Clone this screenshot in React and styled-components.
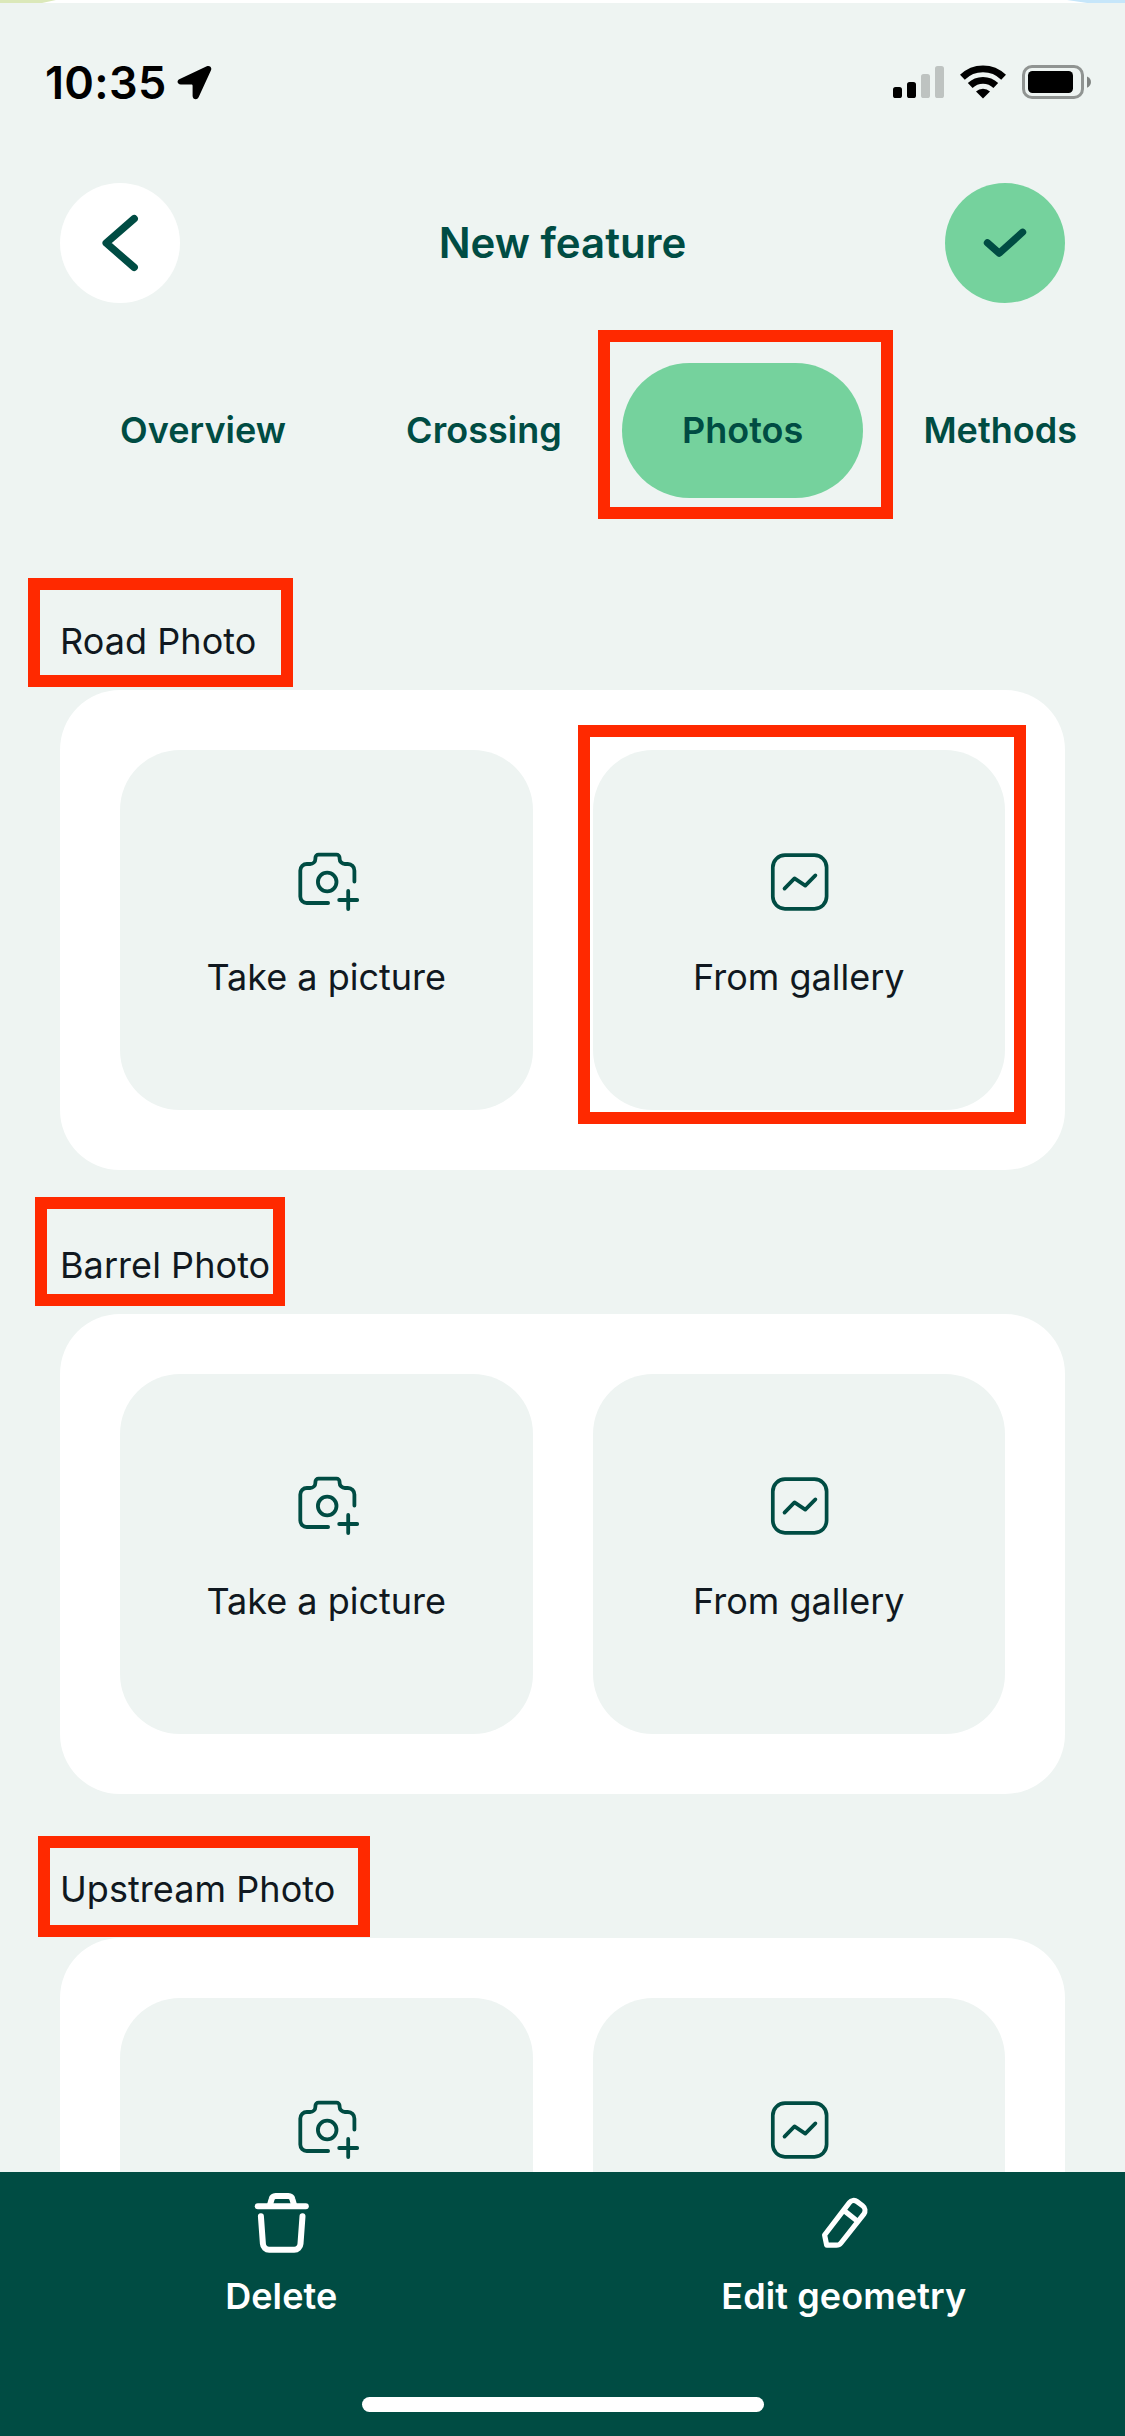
import React from "react";
import styled, { createGlobalStyle } from "styled-components";

const c = {
  bg: "#eef4f2",
  dark: "#004c43",
  green: "#75d29d",
  ink: "#101820",
  red: "#ff2900",
};

const GlobalStyle = createGlobalStyle`
  *, *::before, *::after { box-sizing: border-box; }
  body { margin: 0; background: ${c.bg}; }
  button { border: 0; padding: 0; font: inherit; color: inherit; background: none; }
`;

const Screen = styled.div`
  position: relative;
  width: 1125px;
  height: 2436px;
  display: flex;
  flex-direction: column;
  overflow: hidden;
  background: ${c.bg};
  font-family: Inter, "Liberation Sans", sans-serif;
  color: ${c.ink};
`;

const MapEdge = styled.div`
  flex: none;
  height: 3px;
  display: flex;
  justify-content: space-between;
  background: #fff;
`;

const MapCorner = styled.div`
  width: ${(p) => p.$width}px;
  background: ${(p) => p.$color};
  clip-path: ${(p) =>
    p.$side === "left"
      ? "polygon(0 0, 100% 0, 75% 100%, 0 100%)"
      : "polygon(0 0, 100% 0, 100% 100%, 35% 100%)"};
`;

const StatusBar = styled.div`
  flex: none;
  height: 180px;
  padding: 51px 34px 0 45px;
  display: flex;
  justify-content: space-between;
  align-items: flex-start;
  color: #000;
`;

const StatusGroup = styled.div`
  height: 56px;
  display: flex;
  align-items: center;
  gap: ${(p) => p.$gap}px;
`;

const Time = styled.span`
  width: 119px;
  padding-top: 2px;
  font-size: 45px;
  line-height: 56px;
  font-weight: 560;
  letter-spacing: 0.3px;
  white-space: nowrap;
`;

const Header = styled.header`
  flex: none;
  height: 120px;
  padding: 0 60px;
  display: flex;
  align-items: center;
  justify-content: space-between;
`;

const RoundButton = styled.button`
  width: 120px;
  height: 120px;
  border-radius: 50%;
  display: flex;
  align-items: center;
  justify-content: center;
  color: ${c.dark};
  background: ${(p) => (p.$primary ? c.green : "#fff")};
`;

const Title = styled.h1`
  margin: 0;
  font-size: 42px;
  line-height: 60px;
  font-weight: 600;
  color: ${c.dark};
`;

const Tabs = styled.nav`
  flex: none;
  margin-top: 60px;
  padding-left: 60px;
  display: flex;
  height: 135px;
`;

const Tab = styled.button`
  flex: none;
  padding: 0 60px 2px;
  border-radius: 68px;
  font-size: 36px;
  font-weight: 600;
  letter-spacing: 0.04px;
  white-space: nowrap;
  color: ${c.dark};
  background: ${(p) => (p.$active ? c.green : "transparent")};
`;

const Content = styled.main`
  flex: 1;
  min-height: 0;
  overflow: hidden;
  margin-top: 96px;
  padding: 0 60px;
  display: flex;
  flex-direction: column;
  gap: 48px;
`;

const Section = styled.section`
  flex: none;
`;

const SectionLabel = styled.h2`
  margin: 0;
  height: 96px;
  line-height: 94px;
  font-size: 36px;
  font-weight: 400;
  letter-spacing: 0.06px;
`;

const Card = styled.div`
  display: grid;
  grid-template-columns: 1fr 1fr;
  gap: 60px;
  padding: 60px;
  border-radius: 60px;
  background: #fff;
`;

const Tile = styled.button`
  height: 360px;
  padding-top: 96px;
  border-radius: 60px;
  background: ${c.bg};
  display: flex;
  flex-direction: column;
  align-items: center;
  gap: 35px;
  font-size: 36px;
  line-height: 48px;
  color: ${c.ink};

  svg { color: ${c.dark}; }
`;

const Footer = styled.footer`
  flex: none;
  height: 264px;
  background: ${c.dark};
  display: flex;
  flex-direction: column;
  align-items: center;
`;

const Actions = styled.div`
  align-self: stretch;
  height: 225px;
  padding-top: 15px;
  display: grid;
  grid-template-columns: 1fr 1fr;
  align-items: start;
`;

const Action = styled.button`
  display: flex;
  flex-direction: column;
  align-items: center;
  gap: 13px;
  font-size: 36px;
  line-height: 48px;
  font-weight: 600;
  letter-spacing: 0.1px;
  color: #fff;
`;

const HomeIndicator = styled.div`
  width: 402px;
  height: 15px;
  border-radius: 8px;
  background: #fff;
`;

const Highlight = styled.div`
  position: absolute;
  left: ${(p) => p.$x}px;
  top: ${(p) => p.$y}px;
  width: ${(p) => p.$w}px;
  height: ${(p) => p.$h}px;
  border: 12px solid ${c.red};
  pointer-events: none;
`;

const Icon = ({ size = 72, width, children }) => (
  <svg
    width={size}
    height={size}
    viewBox={`0 0 ${size} ${size}`}
    fill="none"
    stroke="currentColor"
    strokeWidth={width}
    strokeLinecap="round"
    strokeLinejoin="round"
  >
    {children}
  </svg>
);

const BackIcon = () => (
  <Icon width={7.4}>
    <path d="M50.2 11.6 22.2 36l28 24.4" />
  </Icon>
);

const CheckIcon = () => (
  <Icon width={7.2}>
    <path d="m18.4 35.8 11.9 10.4 23.3-21" />
  </Icon>
);

const CameraIcon = () => (
  <Icon width={3.8}>
    <path d="M38.1 57H16.7a6.4 6.4 0 0 1-6.4-6.4V24.6a6.6 6.6 0 0 1 6.6-6.6h3.2a5.3 5.3 0 0 0 5.3-5.3v-.8a3.2 3.2 0 0 1 3.2-3.2h17.8a3.2 3.2 0 0 1 3.2 3.2v.8a5.3 5.3 0 0 0 5.3 5.3h3a6.5 6.5 0 0 1 6.5 6.6v11" />
    <circle cx="37.2" cy="36" r="9.3" />
    <path d="M58.2 45v18M49.200 54h18" />
  </Icon>
);

const GalleryIcon = () => (
  <Icon width={3.7}>
    <rect x="9.8" y="9.2" width="53.8" height="53.6" rx="12.2" />
    <path d="m21.5 42.6 10-10.2 10.8 7.2 10.1-10.2" />
  </Icon>
);

const TrashIcon = () => (
  <Icon width={6}>
    <path d="M12.8 19.3h48" />
    <path d="m25 17.8 1.6-5.6A4.2 4.2 0 0 1 30.6 9h12.8a4.2 4.2 0 0 1 4 3.2l1.6 5.6" />
    <path d="m15.9 29.3 2 27.5a6.3 6.3 0 0 0 6.3 5.9h25a6.3 6.3 0 0 0 6.3-5.9l2-27.5" />
  </Icon>
);

const PencilIcon = () => (
  <Icon width={5.2}>
    <path d="M16.6 48 41.4 15.6a5.5 5.5 0 0 1 7.7-1l5.5 4.2a6 6 0 0 1 1.2 8.3L33 56a6 6 0 0 1-4.7 2.2h-9.6Z" />
    <path d="m37.4 24.6 11.8 9.4" />
  </Icon>
);

const LocationIcon = () => (
  <svg width="35" height="35" viewBox="0 0 35 35">
    <path
      d="M2.8 14 29.8 1.2c2.8-1.2 5.4 1.2 4.2 4L21.6 32.3c-1.5 3.2-6 2.2-6-1.3V20.8c0-.9-.4-1.3-1.3-1.3H3.8C.1 19.5-.7 15.5 2.8 14Z"
      fill="#000"
    />
  </svg>
);

const SignalIcon = () => (
  <svg width="51" height="34" viewBox="0 0 51 34">
    <rect x="0" y="22" width="9" height="11" rx="2.6" />
    <rect x="14" y="17" width="9" height="16" rx="2.6" />
    <rect x="28" y="9" width="9" height="24" rx="2.6" fill="#bec3c1" />
    <rect x="42" y="1" width="9" height="32" rx="2.6" fill="#bec3c1" />
  </svg>
);

const WifiIcon = () => (
  <svg width="46" height="34" viewBox="0 0 46 34">
    <g fill="none" stroke="#000" strokeWidth="6.8">
      <path d="M2.4 12.2A29.4 29.4 0 0 1 43.6 12.2" />
      <path d="M10.2 20.5A18.3 18.3 0 0 1 35.8 20.5" />
    </g>
    <path d="M23 33.5 16 26.500a10 10 0 0 1 14 0Z" />
  </svg>
);

const BatteryIcon = () => (
  <svg width="69" height="34" viewBox="0 0 69 34">
    <rect x="1.5" y="1.5" width="59" height="31" rx="8.5" fill="none" stroke="#909492" strokeWidth="3" />
    <rect x="6" y="6" width="45" height="22" rx="4.5" />
    <path d="M65 11.5c5.300 1.700 5.300 9.500 0 11.200Z" fill="#808482" />
  </svg>
);

const tabs = ["Overview", "Crossing", "Photos", "Methods"];
const sections = ["Road Photo", "Barrel Photo", "Upstream Photo"];
const highlights = [
  { x: 597.5, y: 330, w: 295.5, h: 189 },
  { x: 28, y: 578, w: 265, h: 109 },
  { x: 578, y: 725, w: 448, h: 399 },
  { x: 34.5, y: 1197, w: 250.5, h: 109 },
  { x: 37.5, y: 1836, w: 332, h: 101 },
];

export default function App() {
  return (
    <Screen>
      <GlobalStyle />
      <MapEdge>
        <MapCorner $side="left" $width={56} $color="#dbe8b9" />
        <MapCorner $side="right" $width={58} $color="#c6e6fa" />
      </MapEdge>
      <StatusBar>
        <StatusGroup $gap={13}>
          <Time>10:35</Time>
          <LocationIcon />
        </StatusGroup>
        <StatusGroup $gap={16}>
          <SignalIcon />
          <WifiIcon />
          <BatteryIcon />
        </StatusGroup>
      </StatusBar>
      <Header>
        <RoundButton aria-label="Back">
          <BackIcon />
        </RoundButton>
        <Title>New feature</Title>
        <RoundButton $primary aria-label="Save">
          <CheckIcon />
        </RoundButton>
      </Header>
      <Tabs>
        {tabs.map((name) => (
          <Tab key={name} $active={name === "Photos"}>
            {name}
          </Tab>
        ))}
      </Tabs>
      <Content>
        {sections.map((name) => (
          <Section key={name}>
            <SectionLabel>{name}</SectionLabel>
            <Card>
              <Tile>
                <CameraIcon />
                Take a picture
              </Tile>
              <Tile>
                <GalleryIcon />
                From gallery
              </Tile>
            </Card>
          </Section>
        ))}
      </Content>
      <Footer>
        <Actions>
          <Action>
            <TrashIcon />
            Delete
          </Action>
          <Action>
            <PencilIcon />
            Edit geometry
          </Action>
        </Actions>
        <HomeIndicator />
      </Footer>
      {highlights.map((h) => (
        <Highlight key={h.y} $x={h.x} $y={h.y} $w={h.w} $h={h.h} />
      ))}
    </Screen>
  );
}
